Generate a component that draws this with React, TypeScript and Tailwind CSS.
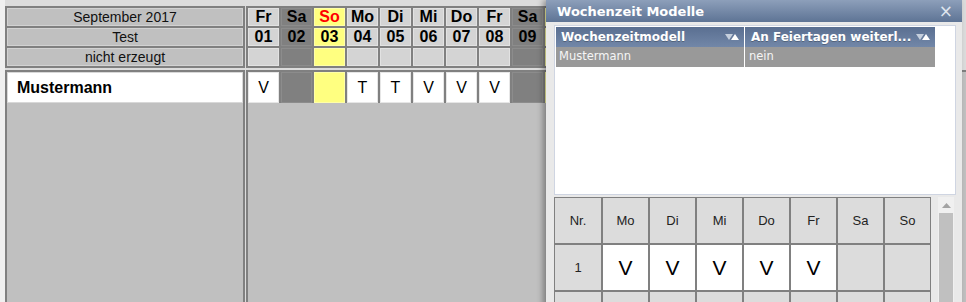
import React from "react";

const names = ["Fr", "Sa", "So", "Mo", "Di", "Mi", "Do"];
const vals: Record<number, string> = { 1: "V", 4: "T", 5: "T", 6: "V", 7: "V", 8: "V" };

type Kind = "wd" | "sa" | "so";
const days = Array.from({ length: 10 }, (_, i) => {
  const d = names[i % 7];
  const kind: Kind = d === "Sa" ? "sa" : d === "So" ? "so" : "wd";
  const n = String(i + 1).padStart(2, "0");
  const hidden = i >= 9;
  return {
    d: hidden ? "" : d,
    n: hidden ? "" : n,
    key: n,
    kind,
    v: hidden ? "" : vals[i + 1] ?? "",
  };
});

const headBg: Record<Kind, string> = {
  wd: "bg-[#d4d4d4] border-[#e2e2e2]",
  sa: "bg-[#808080] border-[#8c8c8c]",
  so: "bg-[#ffff80] border-[#ffffa8]",
};
const dataBg: Record<Kind, string> = {
  wd: "bg-white border-[#e6e6e6]",
  sa: "bg-[#808080] border-[#8c8c8c]",
  so: "bg-[#ffff80] border-[#ffffa8]",
};

function SortIcon() {
  return (
    <svg width="14" height="8" viewBox="0 0 14 8" className="shrink-0">
      <polygon points="0,1 8,1 4,7" fill="#c5cfdd" />
      <polygon points="6,7 14,7 10,1" fill="#ffffff" />
    </svg>
  );
}

export default function App() {
  const weekCols = ["Mo", "Di", "Mi", "Do", "Fr", "Sa", "So"];
  return (
    <div className="relative w-[966px] h-[302px] overflow-hidden bg-[#f0f0f0] font-['Liberation_Sans',Arial,sans-serif] text-black">
      <div className="ml-[5px] h-full pt-[6px] bg-[#dcdcdc] flex gap-[1px]">
        {/* Left column */}
        <div className="w-[240px] shrink-0 flex flex-col h-full">
          <div className="bg-[#808080] p-[2px] flex flex-col gap-[2px]">
            {["September 2017", "Test", "nicht erzeugt"].map((t) => (
              <div
                key={t}
                className="h-[18px] bg-[#c0c0c0] border border-[#d2d2d2] flex items-center justify-center text-[14px] leading-none text-[#111]"
              >
                {t}
              </div>
            ))}
          </div>
          <div className="h-[2px]" />
          <div className="flex-1 bg-[#c0c0c0] border-x-2 border-t-2 border-[#808080] flex flex-col">
            <div className="h-[31px] bg-white border border-[#d8d8d8] flex items-center pl-[9px] text-[16px] font-bold">
              Mustermann
            </div>
          </div>
        </div>

        {/* Right column: days */}
        <div className="w-[740px] shrink-0 flex flex-col h-full">
          <div className="w-fit bg-[#808080] p-[2px] grid grid-cols-[repeat(10,31px)] grid-rows-[18px_18px_18px] gap-[2px]">
            {days.map((x) => (
              <div
                key={"d" + x.key}
                className={`${headBg[x.kind]} border flex items-center justify-center text-[16px] leading-none font-bold ${
                  x.kind === "so" ? "text-[#ff0000]" : "text-black"
                }`}
              >
                {x.d}
              </div>
            ))}
            {days.map((x) => (
              <div
                key={"n" + x.key}
                className={`${headBg[x.kind]} border flex items-center justify-center text-[16px] leading-none font-bold`}
              >
                {x.n}
              </div>
            ))}
            {days.map((x) => (
              <div key={"e" + x.key} className={`${headBg[x.kind]} border`} />
            ))}
          </div>
          <div className="h-[2px]" />
          <div className="flex-1 bg-[#c0c0c0] border-l-2 border-t-2 border-[#808080] flex flex-col">
            <div className="flex gap-[2px] bg-[#808080] self-start pr-[2px]">
              {days.map((x) => (
                <div
                  key={"v" + x.key}
                  className={`${dataBg[x.kind]} border w-[31px] h-[31px] flex items-center justify-center text-[16px] leading-none`}
                >
                  {x.v}
                </div>
              ))}
            </div>
          </div>
        </div>
      </div>

      {/* Dialog */}
      <div className="absolute left-[546px] top-0 w-[416px] h-[310px] bg-[#e9e9e9] shadow-[-3px_0_6px_rgba(0,0,0,0.35)] flex flex-col">
        <div className="h-[22px] shrink-0 bg-gradient-to-b from-[#8d9fba] to-[#5e7495] flex items-center justify-between pl-[11px] pr-[9px]">
          <span className="font-['DejaVu_Sans',Verdana,sans-serif] font-bold text-[13px] text-white leading-none">
            Wochenzeit Modelle
          </span>
          <span className="text-[#dfe5ee] text-[17px] leading-none font-['DejaVu_Sans',sans-serif]">×</span>
        </div>
        <div className="pl-[8px] pr-[6px] pt-[3px] flex flex-col">
          <div className="h-[170px] bg-white border border-[#cfd5e2] p-[1px] font-['DejaVu_Sans',Verdana,sans-serif]">
            <div className="flex gap-[1px] h-[20px]">
              <div className="w-[188px] bg-gradient-to-b from-[#5a6f91] to-[#7287a8] flex items-center justify-between pl-[5px] pr-[5px]">
                <span className="text-white font-bold text-[12px] leading-none [text-shadow:0_1px_0_rgba(0,0,0,0.25)]">
                  Wochenzeitmodell
                </span>
                <SortIcon />
              </div>
              <div className="w-[190px] bg-gradient-to-b from-[#5a6f91] to-[#7287a8] flex items-center justify-between pl-[6px] pr-[5px]">
                <span className="text-white font-bold text-[12px] leading-none [text-shadow:0_1px_0_rgba(0,0,0,0.25)]">
                  An Feiertagen weiterl...
                </span>
                <SortIcon />
              </div>
            </div>
            <div className="flex gap-[1px] h-[20px]">
              <div className="w-[188px] bg-[#999999] flex items-center pl-[3px] text-[11.5px] text-[#f5f5f5] leading-none">
                Mustermann
              </div>
              <div className="w-[190px] bg-[#999999] flex items-center pl-[4px] text-[11.5px] text-[#f5f5f5] leading-none">
                nein
              </div>
            </div>
          </div>
          <div className="mt-[2px] flex items-start">
            <div className="bg-[#808080] p-[1px] grid grid-cols-[46px_repeat(7,45px)] auto-rows-[45px] gap-[2px] h-[120px] overflow-hidden">
              <div className="bg-[#dcdcdc] flex items-center justify-center text-[13px] text-[#222]">Nr.</div>
              {weekCols.map((c) => (
                <div key={c} className="bg-[#dcdcdc] flex items-center justify-center text-[13px] text-[#222]">
                  {c}
                </div>
              ))}
              <div className="bg-[#dcdcdc] flex items-center justify-center text-[13px] text-[#222]">1</div>
              {weekCols.map((c, i) =>
                i < 5 ? (
                  <div key={"r1" + c} className="bg-white flex items-center justify-center text-[21px] leading-none">
                    V
                  </div>
                ) : (
                  <div key={"r1" + c} className="bg-[#dcdcdc]" />
                )
              )}
              {Array.from({ length: 8 }, (_, i) => (
                <div key={"r2" + i} className="bg-[#dcdcdc]" />
              ))}
            </div>
            <div className="ml-[7px] w-[16px] h-[110px] bg-[#f0f0f0] flex flex-col items-stretch">
              <div className="h-[16px] flex items-center justify-center">
                <svg width="9" height="5" viewBox="0 0 9 5">
                  <polygon points="0,5 9,5 4.5,0" fill="#a3a3a3" />
                </svg>
              </div>
              <div className="flex-1 mx-[1px] bg-[#c0c0c0]" />
            </div>
          </div>
        </div>
      </div>
    </div>
  );
}
